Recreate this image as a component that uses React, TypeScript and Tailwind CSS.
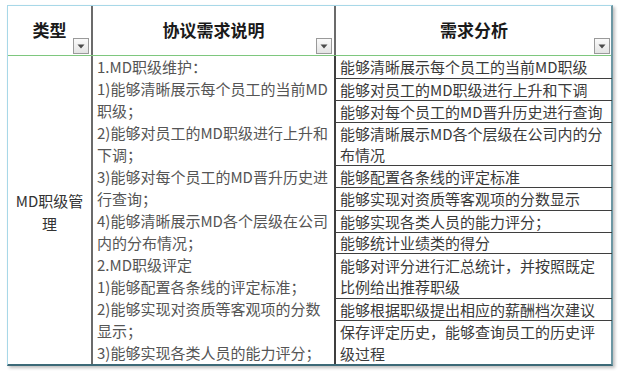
import React from 'react'

const font = { fontFamily: '"Noto Sans CJK SC", "Noto Sans", sans-serif' }

const specLines = [
  '1.MD职级维护：',
  '1)能够清晰展示每个员工的当前MD',
  '职级；',
  '2)能够对员工的MD职级进行上升和',
  '下调；',
  '3)能够对每个员工的MD晋升历史进',
  '行查询；',
  '4)能够清晰展示MD各个层级在公司',
  '内的分布情况；',
  '2.MD职级评定',
  '1)能够配置各条线的评定标准；',
  '2)能够实现对资质等客观项的分数',
  '显示；',
  '3)能够实现各类人员的能力评分；',
]

const analysis: { lines: string[]; h: string }[] = [
  { lines: ['能够清晰展示每个员工的当前MD职级'], h: 'h-[23px]' },
  { lines: ['能够对员工的MD职级进行上升和下调'], h: 'h-[22px]' },
  { lines: ['能够对每个员工的MD晋升历史进行查询'], h: 'h-[22px]' },
  { lines: ['能够清晰展示MD各个层级在公司内的分', '布情况'], h: 'h-[43px]' },
  { lines: ['能够配置各条线的评定标准'], h: 'h-[22px]' },
  { lines: ['能够实现对资质等客观项的分数显示'], h: 'h-[23px]' },
  { lines: ['能够实现各类人员的能力评分；'], h: 'h-[22px]' },
  { lines: ['能够统计业绩类的得分'], h: 'h-[21px]' },
  { lines: ['能够对评分进行汇总统计，并按照既定', '比例给出推荐职级'], h: 'h-[45px]' },
  { lines: ['能够根据职级提出相应的薪酬档次建议'], h: 'h-[22px]' },
  { lines: ['保存评定历史，能够查询员工的历史评', '级过程'], h: 'h-[43px]' },
]

function FilterButton() {
  return (
    <div className="absolute bottom-[1px] right-[2px] flex h-[16px] w-[16px] items-center justify-center border border-[#9a9a9a] bg-gradient-to-b from-[#fafafa] to-[#e4e4e4]">
      <svg width="8" height="5" viewBox="0 0 8 5">
        <path d="M0.5 0.5 L7.5 0.5 L4 4.5 Z" fill="#4a4a4a" />
      </svg>
    </div>
  )
}

export default function App() {
  return (
    <div className="min-h-[374px] w-[619px] bg-white pl-[7px] pt-[5px]" style={font}>
      <div className="w-[606px] border-l border-t border-[#a8d8e8] border-r-2 border-r-[#6d97a3] border-b-2 border-b-[#3d6a78] shadow-[2px_2px_3px_rgba(0,0,0,0.25)]">
        <div className="grid h-[50px] grid-cols-[85px_243px_276px] border-b border-[#7ec77e]">
          <div className="relative flex items-center justify-center border-r-2 border-[#6b6b6b] pb-[1px] text-[17px] font-bold text-[#1a1a1a]">
            类型
            <FilterButton />
          </div>
          <div className="relative flex items-center justify-center border-r-2 border-[#6b6b6b] pb-[1px] text-[17px] font-bold text-[#1a1a1a]">
            协议需求说明
            <FilterButton />
          </div>
          <div className="relative flex items-center justify-center pb-[1px] text-[17px] font-bold text-[#1a1a1a]">
            需求分析
            <FilterButton />
          </div>
        </div>
        <div className="grid grid-cols-[85px_243px_276px]">
          <div className="flex items-center justify-center border-r-2 border-[#6b6b6b] text-center text-[15px] leading-[23px] text-[#333]">
            <div className="pt-[4px]">
              MD职级管
              <br />
              理
            </div>
          </div>
          <div className="overflow-hidden border-r-2 border-[#3f3f3f] pl-[4px] text-[15px] leading-[22px] text-[#555]">
            {specLines.map((l, i) => (
              <div key={i} className="whitespace-nowrap">
                {l}
              </div>
            ))}
          </div>
          <div className="text-[15px] leading-[21.5px] text-[#3a3a3a]">
            {analysis.map((r, i) => (
              <div
                key={i}
                className={`${r.h} ${i < analysis.length - 1 ? 'border-b border-[#3f3f3f]' : ''} flex flex-col justify-center pl-[4px]`}
              >
                {r.lines.map((l, j) => (
                  <div key={j} className="whitespace-nowrap">
                    {l}
                  </div>
                ))}
              </div>
            ))}
          </div>
        </div>
      </div>
    </div>
  )
}
